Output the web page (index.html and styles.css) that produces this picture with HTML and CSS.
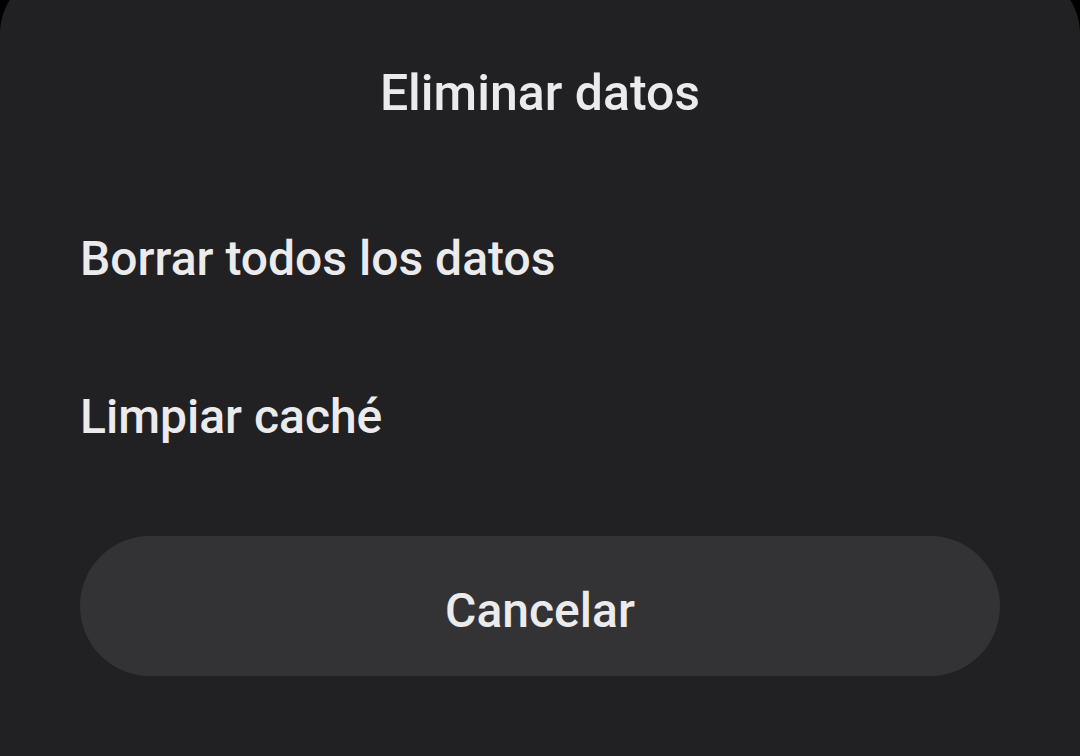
FILE: index.html
```html
<!DOCTYPE html>
<html lang="es">
<head>
    <meta charset="UTF-8">
    <meta name="viewport" content="width=device-width, initial-scale=1.0">
    <title>Eliminar datos</title>
    <link rel="stylesheet" href="styles.css">
</head>
<body>
    <div class="sheet">
        <h1 class="sheet-title">Eliminar datos</h1>
        <ul class="options">
            <li class="option">Borrar todos los datos</li>
            <li class="option">Limpiar caché</li>
        </ul>
        <button class="btn-cancel">Cancelar</button>
    </div>
</body>
</html>
```

FILE: styles.css
```css
:root {
    --background: #000;
    --sheet: #212123;
    --btn: #333335;
    --font: #ebebed;
}

*,
*::before,
*::after {
    box-sizing: border-box;
    padding: 0;
    margin: 0;
}

html,
body {
    height: 100%;
}

body {
    background-color: var(--background);
    color: var(--font);
    font-family: 'Roboto', 'Noto Sans', sans-serif;
    font-weight: 500;
    font-size: 48px;
    line-height: 56px;
    overflow: hidden;
}

button {
    border: none;
    color: inherit;
    font-family: inherit;
    font-weight: inherit;
    font-size: inherit;
    cursor: pointer;
    outline: none;
}

.sheet {
    margin-top: -30px;
    min-height: calc(100% + 30px);
    padding: 94px 80px 0;
    border-radius: 64px 64px 0 0;
    background-color: var(--sheet);
}

.sheet-title {
    font-size: 50px;
    line-height: 58px;
    font-weight: inherit;
    text-align: center;
    margin-bottom: 109px;
}

.options {
    list-style: none;
    display: flex;
    flex-direction: column;
    gap: 102px;
    margin-bottom: 91px;
}

.btn-cancel {
    display: block;
    width: 100%;
    height: 140px;
    padding-top: 8px;
    border-radius: 70px;
    background-color: var(--btn);
}
```
